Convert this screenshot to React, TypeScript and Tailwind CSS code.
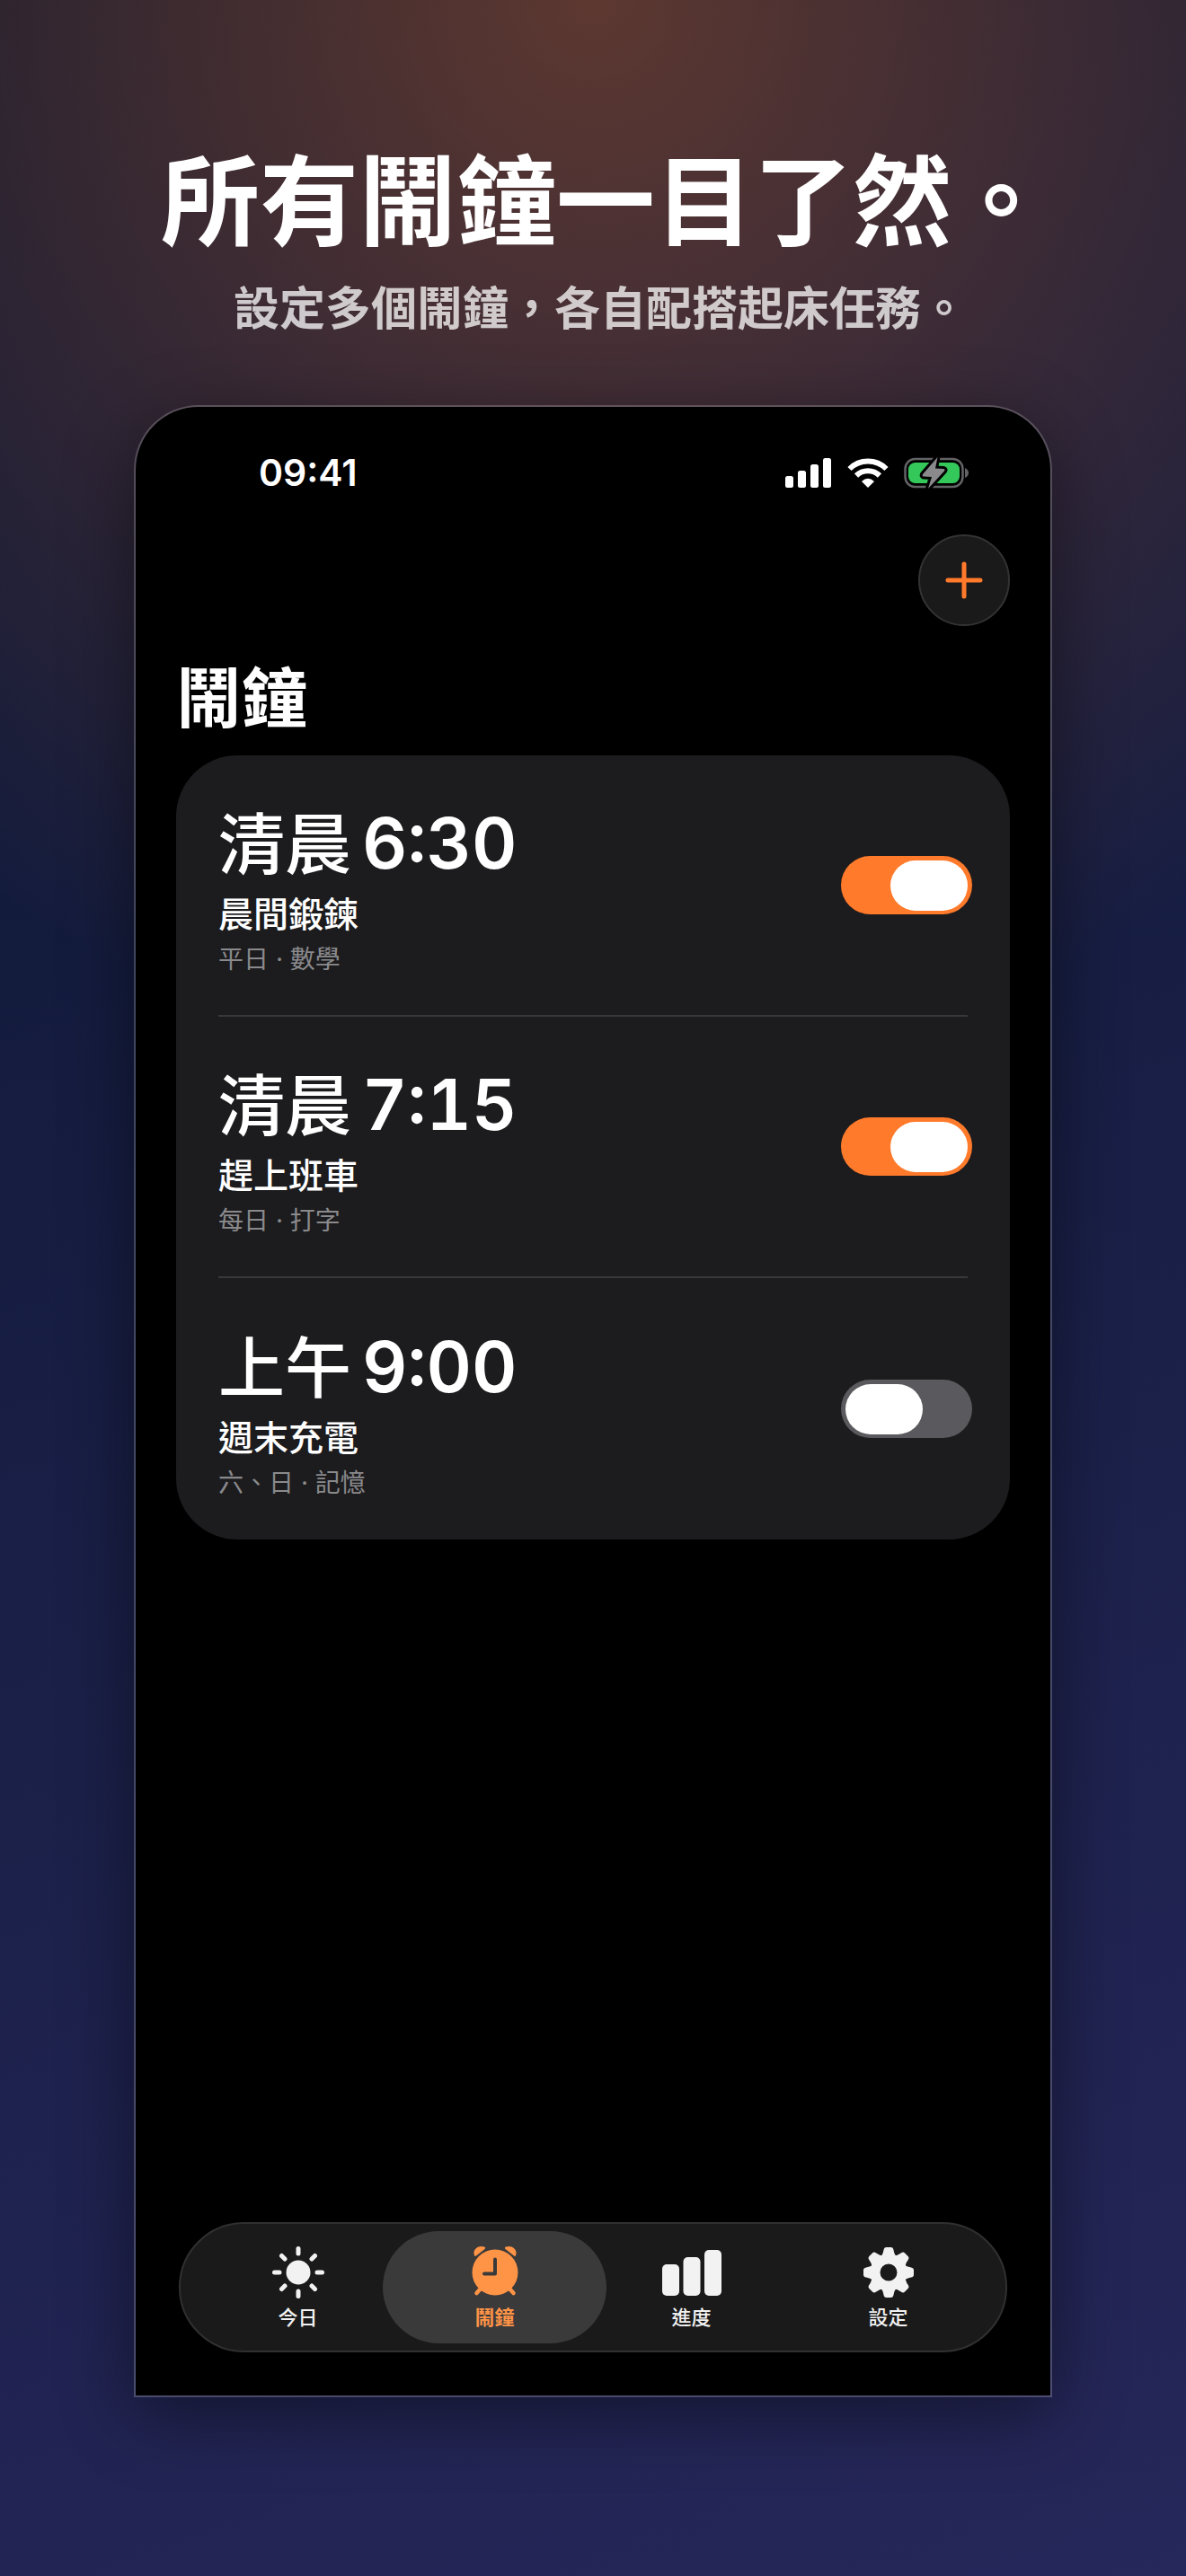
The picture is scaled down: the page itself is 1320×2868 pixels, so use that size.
import { useState } from 'react'
import type { ReactNode } from 'react'

interface Alarm {
  id: string
  period: string
  time: string
  label: string
  detail: string
  enabled: boolean
}

const initialAlarms: Alarm[] = [
  { id: 'workout', period: '清晨', time: '6:30', label: '晨間鍛鍊', detail: '平日 · 數學', enabled: true },
  { id: 'bus', period: '清晨', time: '7:15', label: '趕上班車', detail: '每日 · 打字', enabled: true },
  { id: 'weekend', period: '上午', time: '9:00', label: '週末充電', detail: '六、日 · 記憶', enabled: false },
]

function SignalIcon() {
  return (
    <svg width="52" height="34" viewBox="0 0 52 34" fill="white" aria-hidden="true">
      <rect x="0" y="20" width="9" height="13" rx="2.5" />
      <rect x="14" y="14" width="9" height="19" rx="2.5" />
      <rect x="28" y="7" width="9" height="26" rx="2.5" />
      <rect x="42" y="0" width="9" height="33" rx="2.5" />
    </svg>
  )
}

function WifiIcon() {
  return (
    <svg width="46" height="34" viewBox="0 0 46 34" fill="none" aria-hidden="true">
      <path d="M2.5 12 A29 29 0 0 1 43.5 12" stroke="white" strokeWidth="6" />
      <path d="M10 19.5 A18.5 18.5 0 0 1 36 19.5" stroke="white" strokeWidth="6" />
      <path d="M23 33 L16 26 Q23 19.5 30 26 Z" fill="white" />
    </svg>
  )
}

function BatteryIcon() {
  const bolt = 'M37.5 0 L21 19 Q20 21 22 21.5 L31 22 L27 35 L45 15.5 Q46.5 13.5 44 13 L35 12.5 Z'
  return (
    <svg width="72" height="36" viewBox="0 0 72 36" fill="none" aria-hidden="true">
      <rect x="1.5" y="2" width="64" height="31" rx="11" stroke="#636366" strokeWidth="2.5" />
      <rect x="5" y="6" width="57" height="23" rx="7.5" fill="#34c759" />
      <path d="M68 12 Q72 14 72 17.5 T68 23 Z" fill="#636366" />
      <path d={bolt} fill="black" stroke="black" strokeWidth="6" strokeLinejoin="round" />
      <path d={bolt} fill="#8a8a8d" />
    </svg>
  )
}

function SunIcon() {
  return (
    <svg width="60" height="60" viewBox="0 0 60 60" fill="currentColor" stroke="currentColor" aria-hidden="true">
      <circle cx="30" cy="30" r="13.5" stroke="none" />
      <path
        d="M30 3.5V9 M30 51V56.5 M3.5 30H9 M51 30H56.5 M11.5 11.5L15 15 M45 45L48.5 48.5 M11.5 48.5L15 45 M45 15L48.5 11.5"
        strokeWidth="5"
        strokeLinecap="round"
      />
    </svg>
  )
}

function AlarmIcon() {
  return (
    <svg width="60" height="60" viewBox="0 0 60 60" fill="currentColor" aria-hidden="true">
      <path d="M14 48 L9.5 53 M46 48 L50.5 53" stroke="currentColor" strokeWidth="4.5" strokeLinecap="round" />
      <circle cx="30" cy="30" r="25.5" />
      <path d="M7 11 C4.5 5 11 -1 18 1.5 Q20 2.5 18.5 4 L9 11.5 Q7.5 12.5 7 11 Z" />
      <path d="M53 11 C55.5 5 49 -1 42 1.5 Q40 2.5 41.5 4 L51 11.5 Q52.5 12.5 53 11 Z" />
      <path d="M30 15.5 V31.5 H18" stroke="#3a3a3a" strokeWidth="4" strokeLinecap="round" strokeLinejoin="round" fill="none" />
    </svg>
  )
}

function BarsIcon() {
  return (
    <svg width="68" height="60" viewBox="0 0 68 60" fill="currentColor" aria-hidden="true">
      <rect x="1" y="21" width="19" height="35" rx="5" />
      <rect x="24.5" y="13" width="19" height="43" rx="5" />
      <rect x="48" y="5" width="19" height="51" rx="5" />
    </svg>
  )
}

function GearIcon() {
  const angles = [0, 45, 90, 135, 180, 225, 270, 315]
  return (
    <svg width="60" height="60" viewBox="0 0 60 60" fill="currentColor" aria-hidden="true">
      <circle cx="30" cy="30" r="15" stroke="currentColor" strokeWidth="11" fill="none" />
      {angles.map((angle) => (
        <path
          key={angle}
          d="M20 14 Q23.5 11 24.5 5 Q25 2 27.5 2 H32.5 Q35 2 35.5 5 Q36.5 11 40 14 Z"
          transform={`rotate(${angle} 30 30)`}
        />
      ))}
    </svg>
  )
}

interface SwitchProps {
  label: string
  checked: boolean
  onChange: () => void
}

function Switch({ label, checked, onChange }: SwitchProps) {
  return (
    <label className="flex shrink-0 cursor-pointer">
      <input type="checkbox" role="switch" aria-label={label} checked={checked} onChange={onChange} className="peer sr-only" />
      <span className="flex h-[65px] w-[146px] items-center rounded-full bg-[#5a5a5e] px-[5px] peer-checked:justify-end peer-checked:bg-[#ff7a2b]">
        <span className="h-14 w-[86px] rounded-full bg-white" />
      </span>
    </label>
  )
}

interface AlarmRowProps {
  alarm: Alarm
  onToggle: () => void
}

function AlarmRow({ alarm, onToggle }: AlarmRowProps) {
  return (
    <li className="mx-[47px] flex h-[291px] items-center justify-between border-b-2 border-[#38383a] last:border-b-0">
      <div className="pt-2">
        <p className="flex items-baseline gap-3 text-[74px] leading-[90px]">
          <span className="font-medium">{alarm.period}</span>
          <span className="font-['Inter','Noto_Sans_CJK_TC',sans-serif] text-[78px] font-semibold tabular-nums">{alarm.time}</span>
        </p>
        <p className="mt-1 text-[39px] font-medium leading-[54px]">{alarm.label}</p>
        <p className="mt-1 font-['Inter','Noto_Sans_CJK_TC',sans-serif] text-[28px] leading-[44px] text-[#8a8a8d]">{alarm.detail}</p>
      </div>
      <div className="-mr-[5px]">
        <Switch label={alarm.label} checked={alarm.enabled} onChange={onToggle} />
      </div>
    </li>
  )
}

interface TabProps {
  label: string
  icon: ReactNode
  active: boolean
  onClick: () => void
}

function Tab({ label, icon, active, onClick }: TabProps) {
  return (
    <button
      type="button"
      aria-pressed={active}
      onClick={onClick}
      className={
        active
          ? '-mx-[15px] flex h-[125px] flex-1 flex-col items-center justify-center rounded-full bg-[#3a3a3a] pt-[2px] text-[#ff9447]'
          : '-mx-[15px] flex h-[125px] flex-1 flex-col items-center justify-center pt-[2px] text-[#f2f2f2]'
      }
    >
      {icon}
      <span className={active ? 'text-[22px] font-bold leading-9' : 'text-[22px] font-medium leading-9'}>{label}</span>
    </button>
  )
}

const tabs = [
  { label: '今日', icon: <SunIcon /> },
  { label: '鬧鐘', icon: <AlarmIcon /> },
  { label: '進度', icon: <BarsIcon /> },
  { label: '設定', icon: <GearIcon /> },
]

export default function App() {
  const [alarms, setAlarms] = useState(initialAlarms)
  const [activeTab, setActiveTab] = useState('鬧鐘')

  const toggleAlarm = (id: string) => {
    setAlarms(alarms.map((alarm) => (alarm.id === id ? { ...alarm, enabled: !alarm.enabled } : alarm)))
  }

  return (
    <div
      lang="zh-Hant"
      className="flex min-h-screen flex-col items-center bg-[radial-gradient(circle_1200px_at_50%_0%,rgba(255,122,43,0.33),rgba(255,122,43,0)),linear-gradient(160deg,#0b1630,#26275a)] px-[149px] pt-[149px] pb-[199px] font-['Noto_Sans_CJK_TC',sans-serif] text-white"
    >
      <h1 className="pl-7 text-center text-[110px] font-bold leading-[136px]">所有鬧鐘一目了然。</h1>
      <p className="mt-5 pl-4 text-center text-[51px] font-bold leading-[70px] text-white/75">設定多個鬧鐘，各自配搭起床任務。</p>

      <main className="mt-[76px] flex w-full flex-1 flex-col rounded-t-[72px] border-2 border-white/20 bg-black bg-clip-padding px-[45px] pb-[48px] shadow-[0_20px_80px_rgba(0,0,0,0.45)]">
        <div className="flex h-[142px] items-center justify-between pl-[92px] pr-[46px] pt-[6px]">
          <time className="font-['Inter',sans-serif] text-[41px] font-semibold">09:41</time>
          <div className="flex items-center gap-[17px]">
            <SignalIcon />
            <WifiIcon />
            <BatteryIcon />
          </div>
        </div>

        <div className="flex justify-end">
          <button
            type="button"
            aria-label="新增鬧鐘"
            className="flex size-[102px] items-center justify-center rounded-full border-2 border-[#333333] bg-[#1a1a1a] text-[#ff7a2b]"
          >
            <svg width="42" height="42" viewBox="0 0 42 42" stroke="currentColor" strokeWidth="5" strokeLinecap="round" aria-hidden="true">
              <path d="M21 3V39 M3 21H39" />
            </svg>
          </button>
        </div>

        <h2 className="mt-[25px] text-[73px] font-bold leading-[100px]">鬧鐘</h2>

        <ul className="mt-[19px] rounded-[68px] bg-[#1c1c1e]">
          {alarms.map((alarm) => (
            <AlarmRow key={alarm.id} alarm={alarm} onToggle={() => toggleAlarm(alarm.id)} />
          ))}
        </ul>

        <nav className="mx-[3px] mt-auto flex h-[145px] items-center rounded-full border-2 border-[#303030] bg-[#1a1a1a] px-[21px]">
          {tabs.map((tab) => (
            <Tab
              key={tab.label}
              label={tab.label}
              icon={tab.icon}
              active={tab.label === activeTab}
              onClick={() => setActiveTab(tab.label)}
            />
          ))}
        </nav>
      </main>
    </div>
  )
}
